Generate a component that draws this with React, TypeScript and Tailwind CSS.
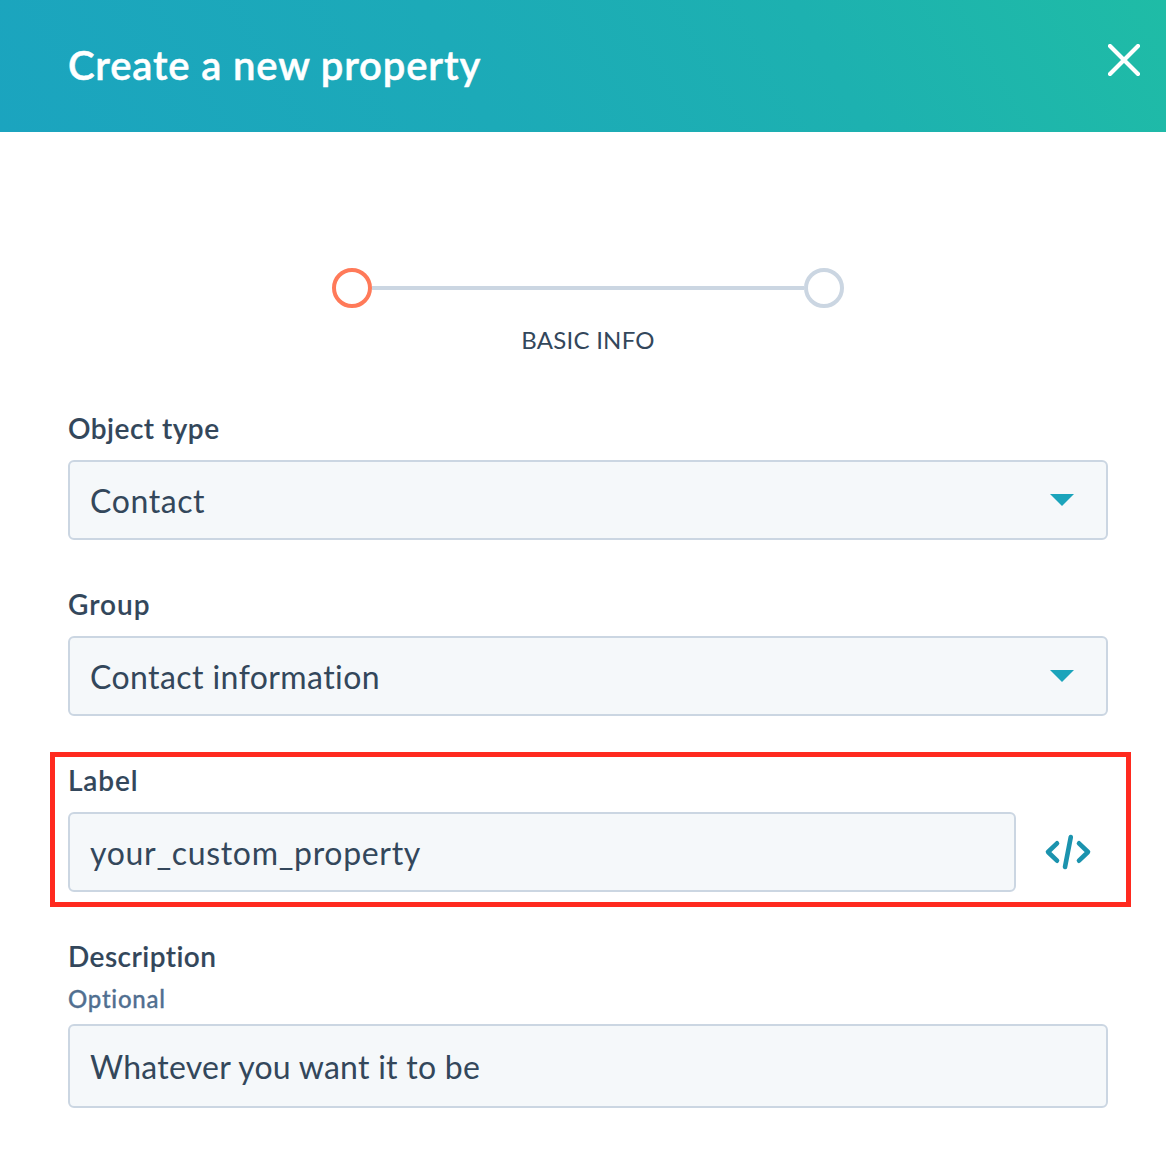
import type { ReactNode } from "react";

function Caret() {
  return (
    <svg width="24" height="12" viewBox="0 0 24 12" className="mr-8 -mt-px" aria-hidden="true">
      <path d="M0 0H24L12 12Z" fill="#1ba4bb" />
    </svg>
  );
}

function FieldLabel({ children, spacing }: { children: ReactNode; spacing: string }) {
  return (
    <div className={"h-10 text-[28px] leading-10 font-semibold whitespace-nowrap [-webkit-text-stroke:0.1px_currentColor] " + spacing}>{children}</div>
  );
}

function Box({ children, size, spacing }: { children: ReactNode; size: string; spacing: string }) {
  return (
    <div
      className={
        "flex items-center justify-between rounded-md border-2 border-[#cbd6e2] bg-[#f5f8fa] pl-5 text-[32px] leading-10 whitespace-nowrap " +
        size +
        " " +
        spacing
      }
    >
      {children}
    </div>
  );
}

export default function App() {
  return (
    <div className="h-[1176px] w-[1166px] overflow-hidden bg-white font-['Lato','Open_Sans',sans-serif] text-[#33475b]">
      <header className="flex h-[132px] items-start justify-between bg-[linear-gradient(60deg,#1ba4bf_0%,#1caab8_40%,#1db1b0_70%,#1fbca6_100%)] pl-[68px] pr-[26px] text-white">
        <h1 className="pt-[41px] text-[40px] leading-[48px] font-semibold whitespace-nowrap tracking-[0.85px] [-webkit-text-stroke:0.5px_currentColor]">
          <span>Create a new property</span>
        </h1>
        <svg width="32" height="32" viewBox="0 0 32 32" className="mt-11" fill="none" stroke="#fff" strokeWidth="4.2" strokeLinecap="round">
          <path d="M2 2L30 30M30 2L2 30" />
        </svg>
      </header>

      <div className="flex items-center justify-center pt-[136px] pr-0 pl-[10px]">
        <div className="size-10 rounded-full border-4 border-[#ff7a59]" />
        <div className="h-1 w-[432px] bg-[#cbd6e2]" />
        <div className="size-10 rounded-full border-4 border-[#cbd6e2]" />
      </div>
      <div className="flex h-16 items-center justify-center pl-[10px] text-[24px]">
        <span className="tracking-[0.25px]">BASIC INFO</span>
      </div>

      <main className="flex flex-col pr-10 pl-[50px] pt-[36px]">
        <section className="h-44 px-[18px]">
          <FieldLabel spacing="tracking-[0.5px]"><span>Object type</span></FieldLabel>
          <div className="h-3" />
          <Box size="h-20" spacing="tracking-[0.6px]"><span className="pt-0.5">Contact</span><Caret /></Box>
        </section>
        <section className="h-[168px] px-[18px]">
          <FieldLabel spacing="tracking-[1px]"><span>Group</span></FieldLabel>
          <div className="h-3" />
          <Box size="h-20" spacing="tracking-[0.42px]"><span className="pt-0.5">Contact information</span><Caret /></Box>
        </section>
        <section className="h-[155px] w-[1081px] border-[5px] border-[#ff2a1f] pl-[13px] pt-[3px]">
          <FieldLabel spacing="tracking-[0.9px]"><span>Label</span></FieldLabel>
          <div className="mt-3 flex items-center">
            <Box size="h-20 w-[948px]" spacing="tracking-[0.68px]"><span className="pt-0.5">your_custom_property</span></Box>
            <svg width="48" height="36" viewBox="0 0 48 36" className="ml-7" fill="none" stroke="#1b93ae" strokeWidth="4.6" strokeLinecap="round" strokeLinejoin="round">
              <path d="M13 9.3L4 18L13 26.7M35 9.3L44 18L35 26.7M26.8 3L21 33" />
            </svg>
          </div>
        </section>
        <section className="px-[18px] pt-[29px]">
          <FieldLabel spacing="tracking-[0.46px]"><span>Description</span></FieldLabel>
          <div className="h-12 text-[24px] leading-[46px] font-medium text-[#516f90] [-webkit-text-stroke:0.3px_currentColor]"><span className="tracking-[0.75px]">Optional</span></div>
          <Box size="h-[84px]" spacing="tracking-[0.26px]"><span className="pt-0.5">Whatever you want it to be</span></Box>
        </section>
      </main>
    </div>
  );
}
